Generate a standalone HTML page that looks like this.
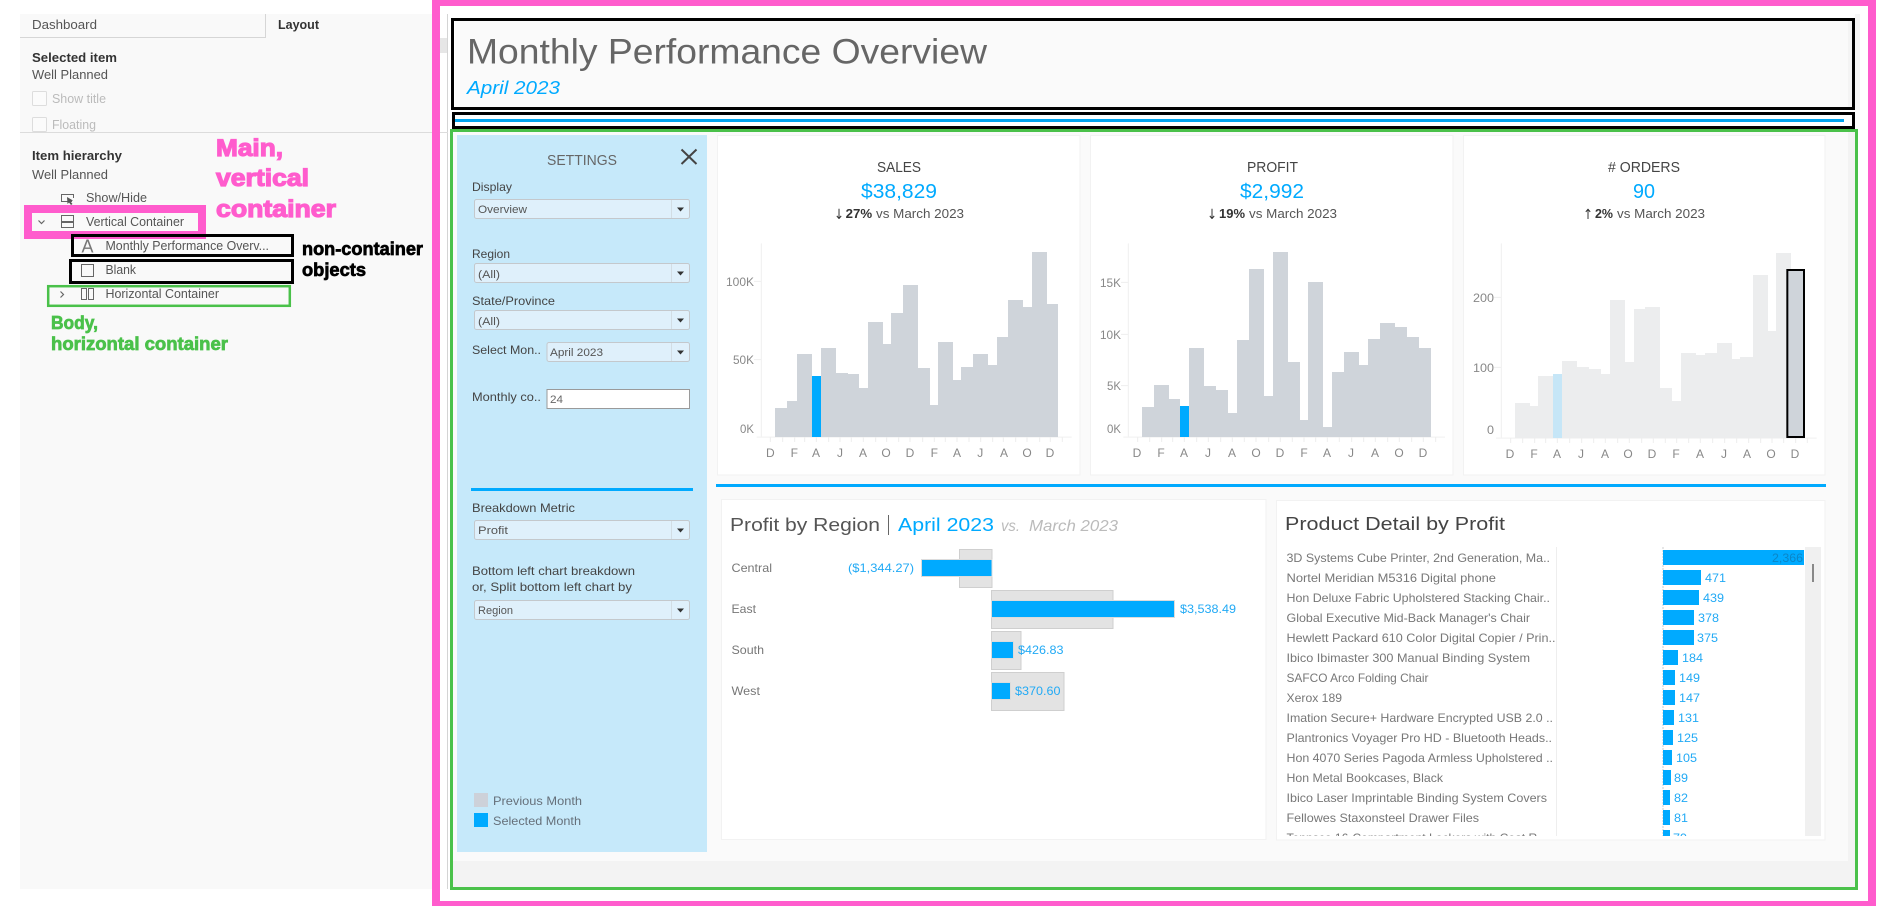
<!DOCTYPE html>
<html lang="en">
<head>
<meta charset="utf-8">
<title>Monthly Performance Overview</title>
<style>
html,body{margin:0;padding:0;background:#fff;width:1885px;height:906px;overflow:hidden}
svg{display:block}
text{font-family:"Liberation Sans",sans-serif;white-space:pre}
.p{font-size:12.5px;fill:#555}
.b{font-size:12.5px;font-weight:bold;fill:#333}
.d{font-size:12.5px;fill:#bbb}
.l{font-size:12px;fill:#444}
.v{font-size:11px;fill:#555}
.h{font-size:15px;fill:#444;text-anchor:start}
.big{font-size:20px;fill:#00aaff}
.c{font-size:13px;fill:#555}
.cb{font-size:13px;fill:#333;font-weight:bold}
text.ar{font-family:"DejaVu Sans",sans-serif;font-size:14px;fill:#333}
.ax{font-size:12px;fill:#888;text-anchor:middle}
.ay{font-size:12px;fill:#888;text-anchor:end}
.r{font-size:12px;fill:#777}
.bl{font-size:12px;fill:#22aaf5}
.pk{font-size:24px;font-weight:bold;fill:#ff5ccd;stroke:#ff5ccd;stroke-width:1.2}
.bk{font-size:18px;font-weight:bold;fill:#000;stroke:#000;stroke-width:.7}
.gr{font-size:18px;font-weight:bold;fill:#4ac14a;stroke:#4ac14a;stroke-width:.7}
</style>
</head>
<body>
<svg xmlns="http://www.w3.org/2000/svg" width="1885" height="906" viewBox="0 0 1885 906">
<defs><clipPath id="cp"><rect x="1280" y="547" width="545" height="289"/></clipPath></defs>
<rect width="1885" height="906" fill="#fff"/>

<!-- left panel -->
<rect x="20" y="14" width="412" height="875" fill="#f9f9f9"/>
<path d="M20 37.5H265.5V14" fill="none" stroke="#d6d6d6"/>
<text class="p" x="32" y="29" textLength="65" lengthAdjust="spacingAndGlyphs">Dashboard</text>
<text class="b" x="278" y="29" textLength="41" lengthAdjust="spacingAndGlyphs">Layout</text>
<text class="b" x="32" y="62" textLength="85" lengthAdjust="spacingAndGlyphs">Selected item</text>
<text class="p" x="32" y="79" textLength="76" lengthAdjust="spacingAndGlyphs">Well Planned</text>
<rect x="32.5" y="91.5" width="14" height="14" rx="1" fill="#fbfbfb" stroke="#ddd"/>
<text class="d" x="52" y="103" textLength="54" lengthAdjust="spacingAndGlyphs">Show title</text>
<rect x="32.5" y="117.5" width="14" height="14" rx="1" fill="#fbfbfb" stroke="#ddd"/>
<text class="d" x="52" y="129" textLength="44" lengthAdjust="spacingAndGlyphs">Floating</text>
<rect x="20" y="132" width="412" height="1" fill="#dcdcdc"/>
<text class="b" x="32" y="160" textLength="90" lengthAdjust="spacingAndGlyphs">Item hierarchy</text>
<text class="p" x="32" y="179" textLength="76" lengthAdjust="spacingAndGlyphs">Well Planned</text>

<path d="M72 201.5H61.5V194.5H73.5V198" fill="none" stroke="#666"/>
<path d="M67 197L73 200.5L70.5 201.5L72.5 204L71 205L69 202.5L67.5 204Z" fill="#555"/>
<text class="p" x="86" y="202" textLength="61" lengthAdjust="spacingAndGlyphs">Show/Hide</text>

<rect x="28" y="209" width="174" height="26" fill="#f9f9f9" stroke="#ff5ccd" stroke-width="8"/>
<path d="M38.5 220.5L41.5 223.5L44.5 220.5" fill="none" stroke="#666" stroke-width="1.2"/>
<path d="M61.5 215.5H73.5V221.5H61.5ZM61.5 222.5H73.5V227.5H61.5Z" fill="none" stroke="#666"/>
<text class="p" x="86" y="226" textLength="98" lengthAdjust="spacingAndGlyphs">Vertical Container</text>

<rect x="72.5" y="235.5" width="220" height="20" fill="none" stroke="#000" stroke-width="3"/>
<text x="81.500" y="252.500" font-size="18" fill="#777" textLength="12" lengthAdjust="spacingAndGlyphs">A</text>
<text class="p" x="105.5" y="250" textLength="163.500" lengthAdjust="spacingAndGlyphs">Monthly Performance Overv...</text>
<rect x="70.500" y="260.500" width="222" height="22" fill="none" stroke="#000" stroke-width="3"/>
<rect x="81.500" y="264.500" width="12" height="12" fill="none" stroke="#666"/>
<text class="p" x="105.500" y="274" textLength="30.500" lengthAdjust="spacingAndGlyphs">Blank</text>
<rect x="48.200" y="286.200" width="241.600" height="19.600" fill="none" stroke="#4ac14a" stroke-width="2.500"/>
<path d="M60.500 291.500L63.500 294.500L60.500 297.500" fill="none" stroke="#666" stroke-width="1.200"/>
<path d="M81.500 288.500H86.500V299.500H81.500ZM88.500 288.500H93.500V299.500H88.500Z" fill="none" stroke="#666"/>
<text class="p" x="105.500" y="298" textLength="113.500" lengthAdjust="spacingAndGlyphs">Horizontal Container</text>

<text class="pk" x="216" y="156" textLength="67" lengthAdjust="spacingAndGlyphs">Main,</text>
<text class="pk" x="216" y="186" textLength="93" lengthAdjust="spacingAndGlyphs">vertical</text>
<text class="pk" x="216" y="217" textLength="120" lengthAdjust="spacingAndGlyphs">container</text>
<text class="bk" x="302" y="255" textLength="121" lengthAdjust="spacingAndGlyphs">non-container</text>
<text class="bk" x="302" y="276" textLength="64" lengthAdjust="spacingAndGlyphs">objects</text>
<text class="gr" x="51" y="329" textLength="47" lengthAdjust="spacingAndGlyphs">Body,</text>
<text class="gr" x="51" y="350" textLength="177" lengthAdjust="spacingAndGlyphs">horizontal container</text>

<!-- dashboard frame -->
<rect x="440" y="38" width="8" height="15" fill="#e6e6e6"/>
<rect x="447" y="14" width="1" height="875" fill="#d4d4d4"/>
<rect x="440" y="132" width="8" height="1" fill="#dcdcdc"/>
<rect x="1855" y="14" width="5" height="96" fill="#f6f6f6"/>
<rect x="455" y="21" width="1397" height="86" fill="#fafafa"/>
<rect x="1848" y="21" width="4" height="86" fill="#f4f4f4"/>
<rect x="453" y="132" width="1402" height="755" fill="#f3f3f3"/>
<rect x="453" y="132" width="1395" height="729" fill="#fafafa"/>

<text x="467" y="63.500" font-size="35" fill="#666" textLength="520" lengthAdjust="spacingAndGlyphs">Monthly Performance Overview</text>
<text x="467" y="94" font-size="18" font-style="italic" fill="#00aaff" textLength="93" lengthAdjust="spacingAndGlyphs">April 2023</text>
<rect x="455" y="119" width="1389" height="3" fill="#00a5f0"/>

<!-- settings -->
<rect x="457" y="135" width="250" height="717" fill="#c6e9fa"/>
<text x="547" y="165" font-size="15" fill="#666" textLength="70" lengthAdjust="spacingAndGlyphs">SETTINGS</text>
<path d="M681.500 149.500L696.500 164M696.500 149.500L681.500 164" stroke="#444" stroke-width="2" fill="none"/>

<text class="l" x="472" y="191" textLength="40" lengthAdjust="spacingAndGlyphs">Display</text>
<g fill="#dff0fb" stroke="#c4c8cc">
<rect x="474.500" y="199.500" width="215" height="19" rx="2"/>
<rect x="474.500" y="263.500" width="215" height="19" rx="2"/>
<rect x="474.500" y="310.500" width="215" height="19" rx="2"/>
<rect x="547" y="342.500" width="142.500" height="19" rx="2"/>
<rect x="474.500" y="520.500" width="215" height="19" rx="2"/>
<rect x="474.500" y="600.500" width="215" height="19" rx="2"/>
</g>
<path d="M671.500 200V218M671.500 264V282M671.500 311V329M671.500 343V361M671.500 521V539M671.500 601V619" stroke="#d2dde4" fill="none"/>
<path d="M677 207.500H684L680.500 211.500ZM677 271.500H684L680.500 275.500ZM677 318.500H684L680.500 322.500ZM677 350.500H684L680.500 354.500ZM677 528.500H684L680.500 532.500ZM677 608.500H684L680.500 612.500Z" fill="#333"/>
<text class="v" x="478" y="213" textLength="49" lengthAdjust="spacingAndGlyphs">Overview</text>
<text class="l" x="472" y="258" textLength="38" lengthAdjust="spacingAndGlyphs">Region</text>
<text class="v" x="478" y="278" textLength="22" lengthAdjust="spacingAndGlyphs">(All)</text>
<text class="l" x="472" y="305" textLength="83" lengthAdjust="spacingAndGlyphs">State/Province</text>
<text class="v" x="478" y="325" textLength="22" lengthAdjust="spacingAndGlyphs">(All)</text>
<text class="l" x="472" y="354" textLength="69" lengthAdjust="spacingAndGlyphs">Select Mon..</text>
<text class="v" x="550" y="356" textLength="53" lengthAdjust="spacingAndGlyphs">April 2023</text>
<text class="l" x="472" y="401" textLength="69" lengthAdjust="spacingAndGlyphs">Monthly co..</text>
<rect x="547" y="389.500" width="142.500" height="19" fill="#fff" stroke="#9a9a9a"/>
<text class="v" x="550" y="403" textLength="13" lengthAdjust="spacingAndGlyphs" style="fill:#666">24</text>
<rect x="471" y="488" width="222" height="3" fill="#00aaff"/>
<text class="l" x="472" y="512" textLength="103" lengthAdjust="spacingAndGlyphs">Breakdown Metric</text>
<text class="v" x="478" y="534" textLength="30" lengthAdjust="spacingAndGlyphs">Profit</text>
<text class="l" x="472" y="575" textLength="163" lengthAdjust="spacingAndGlyphs">Bottom left chart breakdown</text>
<text class="l" x="472" y="591" textLength="160" lengthAdjust="spacingAndGlyphs">or, Split bottom left chart by</text>
<text class="v" x="478" y="614" textLength="35" lengthAdjust="spacingAndGlyphs">Region</text>
<rect x="474" y="793" width="14" height="14" fill="#cdd1d9"/>
<rect x="474" y="813" width="14" height="14" fill="#00aaff"/>
<text class="r" x="493" y="805" textLength="89" lengthAdjust="spacingAndGlyphs" style="fill:#66707a">Previous Month</text>
<text class="r" x="493" y="825" textLength="88" lengthAdjust="spacingAndGlyphs" style="fill:#66707a">Selected Month</text>

<!-- cards -->
<g fill="#fff" stroke="#f2f2f2">
<rect x="717.500" y="135.500" width="362.500" height="339.500"/>
<rect x="1090.500" y="135.500" width="362.500" height="339.500"/>
<rect x="1463.500" y="135.500" width="361.500" height="339.500"/>
<rect x="721.500" y="499.500" width="544.500" height="340"/>
<rect x="1276.500" y="500.500" width="548.500" height="339.500"/>
</g>
<rect x="716" y="484" width="1110" height="3" fill="#00aaff"/>

<!-- sales -->
<text class="h" x="877" y="172" textLength="44" lengthAdjust="spacingAndGlyphs">SALES</text>
<text class="big" x="861" y="198" textLength="76" lengthAdjust="spacingAndGlyphs">$38,829</text>
<text class="ar" x="834" y="219" textLength="10" lengthAdjust="spacingAndGlyphs">↓</text>
<text class="cb" x="845.700" y="218" textLength="26.500" lengthAdjust="spacingAndGlyphs">27%</text>
<text class="c" x="876" y="218" textLength="88" lengthAdjust="spacingAndGlyphs">vs March 2023</text>
<g transform="translate(710 130) scale(.33333)">
<path d="M154 340V921M140 921.500H1085" stroke="#f0f0f0" stroke-width="3" fill="none"/>
<path d="M132 454H154M132 689H154M181 921v15M218 921v15M254 921v15M284 921v15M319 921v15M356 921v15M390 921v15M424 921v15M460 921v15M497 921v15M530 921v15M566 921v15M600 921v15M638 921v15M673 921v15M706 921v15M741 921v15M777 921v15M812 921v15M848 921v15M880 921v15M917 921v15M951 921v15M989 921v15M1021 921v15M1057 921v15" stroke="#eee" stroke-width="3" fill="none"/>
<path d="M195 921V834H231V813H261V672H306V921ZM333 921V654H378V729H414V732H447V774H474V576H519V642H543V549H579V465H624V714H660V825H684V636H729V750H753V711H789V672H834V705H861V621H894V510H939V531H966V366H1011V522H1044V921Z" fill="#cfd4da"/>
<rect x="306" y="738" width="27" height="183" fill="#00aaff"/>
</g>
<g class="axl">
<text class="ay" x="754" y="286" textLength="28" lengthAdjust="spacingAndGlyphs">100K</text>
<text class="ay" x="754" y="364" textLength="21" lengthAdjust="spacingAndGlyphs">50K</text>
<text class="ay" x="754" y="433" textLength="14" lengthAdjust="spacingAndGlyphs">0K</text>
<text class="ax" x="770.300" y="457">D</text><text class="ax" x="794.300" y="457">F</text><text class="ax" x="816" y="457">A</text><text class="ax" x="840" y="457">J</text><text class="ax" x="863" y="457">A</text><text class="ax" x="886" y="457">O</text><text class="ax" x="910" y="457">D</text><text class="ax" x="934.300" y="457">F</text><text class="ax" x="957" y="457">A</text><text class="ax" x="980.300" y="457">J</text><text class="ax" x="1004" y="457">A</text><text class="ax" x="1027" y="457">O</text><text class="ax" x="1050" y="457">D</text>
</g>

<!-- profit -->
<text class="h" x="1247" y="172" textLength="51" lengthAdjust="spacingAndGlyphs">PROFIT</text>
<text class="big" x="1240" y="198" textLength="64" lengthAdjust="spacingAndGlyphs">$2,992</text>
<text class="ar" x="1207" y="219" textLength="10" lengthAdjust="spacingAndGlyphs">↓</text>
<text class="cb" x="1219" y="218" textLength="26" lengthAdjust="spacingAndGlyphs">19%</text>
<text class="c" x="1249" y="218" textLength="88" lengthAdjust="spacingAndGlyphs">vs March 2023</text>
<g transform="translate(1090 130) scale(.33333)">
<path d="M115 340V921M100 921.500H1065" stroke="#f0f0f0" stroke-width="3" fill="none"/>
<path d="M93 457H115M93 613H115M93 767H115M143 921v15M179 921v15M215 921v15M248 921v15M283 921v15M320 921v15M355 921v15M392 921v15M427 921v15M463 921v15M498 921v15M536 921v15M571 921v15M607 921v15M642 921v15M677 921v15M712 921v15M748 921v15M785 921v15M821 921v15M856 921v15M893 921v15M928 921v15M965 921v15M1000 921v15M1037 921v15" stroke="#eee" stroke-width="3" fill="none"/>
<path d="M156 921V831H192V765H237V807H270V921ZM297 921V654H342V768H378V780H414V849H441V630H477V417H522V798H549V366H594V696H630V870H654V456H699V891H726V726H762V666H807V705H834V627H870V579H915V591H951V621H987V654H1023V921Z" fill="#cfd4da"/>
<rect x="270" y="828" width="27" height="93" fill="#00aaff"/>
</g>
<text class="ay" x="1121" y="287" textLength="21" lengthAdjust="spacingAndGlyphs">15K</text>
<text class="ay" x="1121" y="339" textLength="21" lengthAdjust="spacingAndGlyphs">10K</text>
<text class="ay" x="1121" y="390" textLength="14" lengthAdjust="spacingAndGlyphs">5K</text>
<text class="ay" x="1121" y="433" textLength="14" lengthAdjust="spacingAndGlyphs">0K</text>
<text class="ax" x="1137" y="457">D</text><text class="ax" x="1161" y="457">F</text><text class="ax" x="1184" y="457">A</text><text class="ax" x="1208" y="457">J</text><text class="ax" x="1232" y="457">A</text><text class="ax" x="1256" y="457">O</text><text class="ax" x="1280" y="457">D</text><text class="ax" x="1304" y="457">F</text><text class="ax" x="1327" y="457">A</text><text class="ax" x="1351" y="457">J</text><text class="ax" x="1375" y="457">A</text><text class="ax" x="1399" y="457">O</text><text class="ax" x="1423" y="457">D</text>

<!-- orders -->
<text class="h" x="1608" y="172" textLength="72" lengthAdjust="spacingAndGlyphs"># ORDERS</text>
<text class="big" x="1633" y="198" textLength="22" lengthAdjust="spacingAndGlyphs">90</text>
<text class="ar" x="1583" y="219" textLength="10" lengthAdjust="spacingAndGlyphs">↑</text>
<text class="cb" x="1595" y="218" textLength="18" lengthAdjust="spacingAndGlyphs">2%</text>
<text class="c" x="1617" y="218" textLength="88" lengthAdjust="spacingAndGlyphs">vs March 2023</text>
<g transform="translate(1460 130) scale(.33333)">
<path d="M124 340V924M108 924.500H1070" stroke="#f0f0f0" stroke-width="3" fill="none"/>
<path d="M102 502H124M102 712H124M152 924v15M188 924v15M224 924v15M257 924v15M292 924v15M329 924v15M365 924v15M401 924v15M436 924v15M473 924v15M508 924v15M545 924v15M580 924v15M616 924v15M650 924v15M686 924v15M721 924v15M758 924v15M794 924v15M830 924v15M866 924v15M902 924v15M936 924v15M971 924v15M1007 924v15M1042 924v15" stroke="#eee" stroke-width="3" fill="none"/>
<path d="M165 924V819H210V828H234V738H279V924ZM306 924V693H351V711H387V717H423V732H450V510H495V696H522V537H555V531H600V774H636V813H663V669H708V675H735V669H771V639H816V687H840V681H879V435H924V603H948V369H993V924Z" fill="#ecedee"/>
<rect x="279" y="732" width="27" height="192" fill="#c6e6f7"/>
<rect x="982" y="420" width="50" height="501" fill="#cfd4da" stroke="#000" stroke-width="6"/>
</g>
<text class="ay" x="1494" y="302" textLength="21" lengthAdjust="spacingAndGlyphs">200</text>
<text class="ay" x="1494" y="372" textLength="21" lengthAdjust="spacingAndGlyphs">100</text>
<text class="ay" x="1494" y="434" textLength="7" lengthAdjust="spacingAndGlyphs">0</text>
<text class="ax" x="1510" y="458">D</text><text class="ax" x="1534" y="458">F</text><text class="ax" x="1557" y="458">A</text><text class="ax" x="1581" y="458">J</text><text class="ax" x="1605" y="458">A</text><text class="ax" x="1628" y="458">O</text><text class="ax" x="1652" y="458">D</text><text class="ax" x="1676" y="458">F</text><text class="ax" x="1700" y="458">A</text><text class="ax" x="1724" y="458">J</text><text class="ax" x="1747" y="458">A</text><text class="ax" x="1771" y="458">O</text><text class="ax" x="1795" y="458">D</text>

<!-- profit by region -->
<text x="730" y="531" font-size="18" fill="#555" textLength="150" lengthAdjust="spacingAndGlyphs">Profit by Region</text>
<rect x="888" y="515" width="1" height="20" fill="#666"/>
<text x="898" y="531" font-size="18" fill="#00aaff" textLength="96" lengthAdjust="spacingAndGlyphs">April 2023</text>
<text x="1001" y="531" font-size="16" font-style="italic" fill="#bbb" textLength="19" lengthAdjust="spacingAndGlyphs">vs.</text>
<text x="1029" y="531" font-size="16" font-style="italic" fill="#bbb" textLength="89" lengthAdjust="spacingAndGlyphs">March 2023</text>
<text class="r" x="731.500" y="572" textLength="40.500" lengthAdjust="spacingAndGlyphs">Central</text>
<text class="r" x="731.500" y="613" textLength="24.500" lengthAdjust="spacingAndGlyphs">East</text>
<text class="r" x="731.500" y="654" textLength="32.500" lengthAdjust="spacingAndGlyphs">South</text>
<text class="r" x="731.500" y="695" textLength="28.500" lengthAdjust="spacingAndGlyphs">West</text>
<g fill="#e3e3e3" stroke="#cfcfcf">
<rect x="959.500" y="549.500" width="32.500" height="38"/>
<rect x="991.500" y="590.500" width="121.500" height="38"/>
<rect x="991.500" y="631.500" width="29.500" height="38"/>
<rect x="991.500" y="672.500" width="72.500" height="38"/>
</g>
<g fill="#00aaff" stroke="#dcdcdc">
<rect x="921.500" y="559.500" width="70.500" height="17"/>
<rect x="991.500" y="600.500" width="183" height="17"/>
<rect x="991.500" y="641.500" width="22" height="17"/>
<rect x="991.500" y="682.500" width="19" height="17"/>
</g>
<text class="bl" x="848" y="572" textLength="66" lengthAdjust="spacingAndGlyphs">($1,344.27)</text>
<text class="bl" x="1180" y="613" textLength="56" lengthAdjust="spacingAndGlyphs">$3,538.49</text>
<text class="bl" x="1018" y="654" textLength="45.500" lengthAdjust="spacingAndGlyphs">$426.83</text>
<text class="bl" x="1015" y="695" textLength="45.500" lengthAdjust="spacingAndGlyphs">$370.60</text>

<!-- product detail -->
<text x="1285" y="530" font-size="18" fill="#444" textLength="220" lengthAdjust="spacingAndGlyphs">Product Detail by Profit</text>
<rect x="1556" y="547" width="1" height="289" fill="#eee"/>
<rect x="1805" y="547" width="16" height="289" fill="#f0f0f0"/>
<rect x="1812" y="564" width="2" height="18" fill="#888"/>
<path d="M1663 547V836" stroke="#ccc" stroke-dasharray="2 1" fill="none"/>
<g clip-path="url(#cp)">
<g class="rows">
<text class="r" x="1286.500" y="562" textLength="263.500" lengthAdjust="spacingAndGlyphs">3D Systems Cube Printer, 2nd Generation, Ma..</text>
<text class="r" x="1286.500" y="582" textLength="209.500" lengthAdjust="spacingAndGlyphs">Nortel Meridian M5316 Digital phone</text>
<text class="r" x="1286.500" y="602" textLength="263.500" lengthAdjust="spacingAndGlyphs">Hon Deluxe Fabric Upholstered Stacking Chair..</text>
<text class="r" x="1286.500" y="622" textLength="243.500" lengthAdjust="spacingAndGlyphs">Global Executive Mid-Back Manager's Chair</text>
<text class="r" x="1286.500" y="642" textLength="269" lengthAdjust="spacingAndGlyphs">Hewlett Packard 610 Color Digital Copier / Prin..</text>
<text class="r" x="1286.500" y="662" textLength="243.500" lengthAdjust="spacingAndGlyphs">Ibico Ibimaster 300 Manual Binding System</text>
<text class="r" x="1286.500" y="682" textLength="142" lengthAdjust="spacingAndGlyphs">SAFCO Arco Folding Chair</text>
<text class="r" x="1286.500" y="702" textLength="55.500" lengthAdjust="spacingAndGlyphs">Xerox 189</text>
<text class="r" x="1286.500" y="722" textLength="266.500" lengthAdjust="spacingAndGlyphs">Imation Secure+ Hardware Encrypted USB 2.0 ..</text>
<text class="r" x="1286.500" y="742" textLength="265.500" lengthAdjust="spacingAndGlyphs">Plantronics Voyager Pro HD - Bluetooth Heads..</text>
<text class="r" x="1286.500" y="762" textLength="266.500" lengthAdjust="spacingAndGlyphs">Hon 4070 Series Pagoda Armless Upholstered ..</text>
<text class="r" x="1286.500" y="782" textLength="156.500" lengthAdjust="spacingAndGlyphs">Hon Metal Bookcases, Black</text>
<text class="r" x="1286.500" y="802" textLength="260.500" lengthAdjust="spacingAndGlyphs">Ibico Laser Imprintable Binding System Covers</text>
<text class="r" x="1286.500" y="822" textLength="192.500" lengthAdjust="spacingAndGlyphs">Fellowes Staxonsteel Drawer Files</text>
<text class="r" x="1286.500" y="842" textLength="257.500" lengthAdjust="spacingAndGlyphs">Tennsco 16-Compartment Lockers with Coat R..</text>
</g>
<g fill="#00aaff">
<rect x="1663" y="550" width="141" height="15"/>
<rect x="1663" y="570" width="38" height="15"/>
<rect x="1663" y="590" width="36" height="15"/>
<rect x="1663" y="610" width="31" height="15"/>
<rect x="1663" y="630" width="31" height="15"/>
<rect x="1663" y="650" width="15" height="15"/>
<rect x="1663" y="670" width="12" height="15"/>
<rect x="1663" y="690" width="12" height="15"/>
<rect x="1663" y="710" width="11" height="15"/>
<rect x="1663" y="730" width="10" height="15"/>
<rect x="1663" y="750" width="9" height="15"/>
<rect x="1663" y="770" width="8" height="15"/>
<rect x="1663" y="790" width="7" height="15"/>
<rect x="1663" y="810" width="7" height="15"/>
<rect x="1663" y="830" width="7" height="15"/>
</g>
<text class="bl" x="1772" y="562" textLength="31" lengthAdjust="spacingAndGlyphs" style="fill:#0a86c8">2,366</text>
<text class="bl" x="1705" y="582" textLength="21" lengthAdjust="spacingAndGlyphs">471</text>
<text class="bl" x="1703" y="602" textLength="21" lengthAdjust="spacingAndGlyphs">439</text>
<text class="bl" x="1698" y="622" textLength="21" lengthAdjust="spacingAndGlyphs">378</text>
<text class="bl" x="1697" y="642" textLength="21" lengthAdjust="spacingAndGlyphs">375</text>
<text class="bl" x="1682" y="662" textLength="21" lengthAdjust="spacingAndGlyphs">184</text>
<text class="bl" x="1679" y="682" textLength="21" lengthAdjust="spacingAndGlyphs">149</text>
<text class="bl" x="1679" y="702" textLength="21" lengthAdjust="spacingAndGlyphs">147</text>
<text class="bl" x="1678" y="722" textLength="21" lengthAdjust="spacingAndGlyphs">131</text>
<text class="bl" x="1677" y="742" textLength="21" lengthAdjust="spacingAndGlyphs">125</text>
<text class="bl" x="1676" y="762" textLength="21" lengthAdjust="spacingAndGlyphs">105</text>
<text class="bl" x="1674" y="782" textLength="14" lengthAdjust="spacingAndGlyphs">89</text>
<text class="bl" x="1674" y="802" textLength="14" lengthAdjust="spacingAndGlyphs">82</text>
<text class="bl" x="1674" y="822" textLength="14" lengthAdjust="spacingAndGlyphs">81</text>
<text class="bl" x="1673" y="842" textLength="14" lengthAdjust="spacingAndGlyphs">79</text>
</g>

<!-- annotation frames -->
<rect x="452.500" y="19.500" width="1401" height="89" fill="none" stroke="#000" stroke-width="3"/>
<rect x="453.500" y="113.500" width="1400" height="14" fill="none" stroke="#000" stroke-width="3"/>
<rect x="451.500" y="130.500" width="1405" height="758" fill="none" stroke="#4ac14a" stroke-width="3"/>
<g fill="#ff5ccd">
<rect x="432" y="0" width="1444" height="6"/>
<rect x="432" y="0" width="8" height="906"/>
<rect x="1868" y="0" width="8" height="906"/>
<rect x="432" y="901" width="1444" height="5"/>
</g>
</svg>
</body>
</html>
